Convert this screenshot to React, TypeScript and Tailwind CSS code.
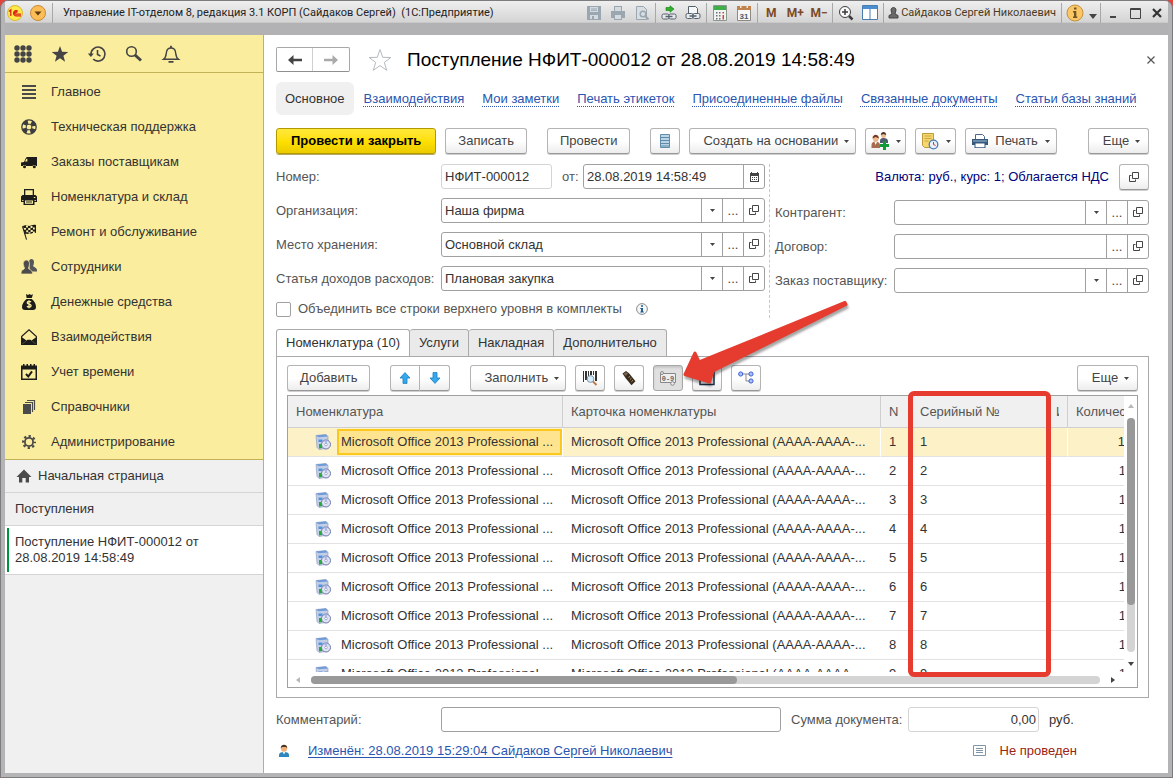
import { useState } from 'react';
import type { ReactNode } from 'react';
import clsx from 'clsx';

const menuItems = [
  { label: 'Главное', icon: <MenuIcon /> },
  { label: 'Техническая поддержка', icon: <RingIcon /> },
  { label: 'Заказы поставщикам', icon: <VanIcon /> },
  { label: 'Номенклатура и склад', icon: <PrinterIcon /> },
  { label: 'Ремонт и обслуживание', icon: <FlagIcon /> },
  { label: 'Сотрудники', icon: <PeopleIcon /> },
  { label: 'Денежные средства', icon: <MoneyIcon /> },
  { label: 'Взаимодействия', icon: <MailIcon /> },
  { label: 'Учет времени', icon: <DateIcon /> },
  { label: 'Справочники', icon: <BooksIcon /> },
  { label: 'Администрирование', icon: <GearIcon /> },
];

const links = [
  'Взаимодействия',
  'Мои заметки',
  'Печать этикеток',
  'Присоединенные файлы',
  'Связанные документы',
  'Статьи базы знаний',
];

const tabs = ['Номенклатура (10)', 'Услуги', 'Накладная', 'Дополнительно'];

const rows = Array.from({ length: 10 }, (_, i) => i + 1);

/* ---------- Sidebar icons ---------- */

function Icon({ children, className }: { children: ReactNode; className?: string }) {
  return (
    <svg viewBox="0 0 16 16" className={clsx('shrink-0', className ?? 'w-4 h-4')} fill="#1c1c1a" aria-hidden="true">
      {children}
    </svg>
  );
}

function MenuIcon() {
  return (
    <Icon>
      <path d="M1 1h14v2H1zM1 5h14v2H1zM1 9h14v2H1zM1 13h14v2H1z" fill="#4a4a4a" />
    </Icon>
  );
}

function RingIcon() {
  return (
    <Icon>
      <circle cx="8" cy="8" r="7.2" fill="#fbed9e" stroke="#3c3c38" strokeWidth="1.3" />
      <circle cx="8" cy="8" r="5" fill="none" stroke="#3c3c40" strokeWidth="4.4" strokeDasharray="4.4 3.45" strokeDashoffset="-1.8" />
      <circle cx="8" cy="8" r="2.900" fill="#fbed9e" stroke="#3c3c38" />
    </Icon>
  );
}

function VanIcon() {
  return (
    <Icon>
      <path d="M6 3h10v9h-1a2 2 0 0 0-3.500 0H5.200a2 2 0 0 0-3.500 0H0V8.500L3 8l2-4.200z" />
      <path d="M4 7.600 5.400 4.800h1V7.600z" fill="#fbed9e" />
      <circle cx="3.500" cy="12.700" r="1.500" />
      <circle cx="13.300" cy="12.700" r="1.500" />
    </Icon>
  );
}

function PrinterIcon() {
  return (
    <Icon>
      <path d="M3 0h10v6h1.500L16 7.500V13h-2.500v3h-11v-3H0V7.500L1.500 6H3z" />
      <path d="M4.300 1.300h7.400V6H4.300zM4 11.500h8v3.200H4z" fill="#fbed9e" />
      <path d="M5 12.400h6v1H5z" />
      <path d="M12.800 8h1.500v1h-1.500zM1.200 11h1.200v1H1.200zM13.600 11h1.200v1h-1.200z" fill="#fbed9e" />
    </Icon>
  );
}

function FlagIcon() {
  return (
    <Icon>
      <path d="M1 2.500 2 2l4 13.500-1 .3z" />
      <path d="M2 2C5 0 7 3 10 1.500c2-.9 3.500-1 5-.5v8c-2-.5-3.500 0-5 .8-2.500 1-4-.8-6.200.4z" />
      <path d="M5 1.500h2v2H5zM9.500 2h2v2h-2zM3 4h2v1.800H3zM7.200 4h2.200v2H7.200zM12 3.500h1.800v2H12zM5.200 6.200h2v2h-2zM9.600 6h2.200v2H9.600zM7.500 8.200h2v1.500h-2zM12 7.500h1.800V9H12z" fill="#fbed9e" />
    </Icon>
  );
}

function PeopleIcon() {
  return (
    <Icon>
      <path d="M8 3c0-4 5-4 5 0 0 2-.8 3-.8 4 0 1 3.800 1.500 3.800 4v1.500H9z" fill="#55555a" />
      <path d="M2.200 4.800c0-5 6.300-5 6.300 0 0 2-1 3.500-1 4.500 0 1.200 4 1.500 4 4.700V15H0v-1c0-3.200 3.500-3.500 3.500-4.700 0-1-1.300-2.500-1.300-4.500z" fill="#4c4c4c" stroke="#fbed9e" strokeWidth=".7" />
    </Icon>
  );
}

function MoneyIcon() {
  return (
    <Icon>
      <path d="M5 0 7 1l1.500-1L10 1l2-.7L10.800 4H5.600zM5.500 5h5.300C13.500 7 15 10 15 13c0 2-1 3-3 3H4c-2 0-3-1-3-3 0-3 2-6 4.500-8z" />
      <path d="M10 8c-.7-.9-3.800-1.100-3.800.7 0 1.900 3.900 1.100 3.900 3 0 1.900-3.200 1.700-4.200.6M8 6.300v8" fill="none" stroke="#fbed9e" strokeWidth="1.300" />
    </Icon>
  );
}

function MailIcon() {
  return (
    <Icon>
      <path d="m.6 7.500 7.400-6.700 7.400 6.700v7.900H.6z" fill="none" stroke="#1c1c1a" strokeWidth="1.100" />
      <path d="M.5 8 5.500 11.500.5 15.500zM15.500 8l-5 3.500 5 4zM1 15.500l5.500-4.800h3L15 15.500z" />
    </Icon>
  );
}

function DateIcon() {
  return (
    <Icon>
      <path d="M0 1.500h2V0h1.500v1.500h2V0H7v1.500h2V0h1.500v1.500h2V0H14v1.500h2V16H0z" />
      <path d="M1.500 5.500h13v9h-13z" fill="#fbed9e" />
      <path d="m5 10 2.300 2.500L11 7.300" fill="none" stroke="#1c1c1a" strokeWidth="2" />
    </Icon>
  );
}

function BooksIcon() {
  return (
    <Icon>
      <path d="M2 5h8v10H2z" fill="#4a4a4a" />
      <path d="M4 3.500h7.500V13M6 1.500h7.500V11" fill="none" stroke="#4a4a4a" strokeWidth="1.200" />
    </Icon>
  );
}

function GearIcon() {
  return (
    <Icon>
      <circle cx="8" cy="8" r="5.900" fill="none" stroke="#4a4a4a" strokeWidth="2.200" strokeDasharray="2.300 2.330" strokeDashoffset="1.150" />
      <circle cx="8" cy="8" r="4.100" fill="none" stroke="#4a4a4a" strokeWidth="1.800" />
    </Icon>
  );
}

/* ---------- Small glyphs used by the form ---------- */

function Caret({ className }: { className?: string }) {
  return (
    <svg viewBox="0 0 5 3" className={clsx('w-[5px] h-[3px] shrink-0', className)} fill="#444" aria-hidden="true">
      <path d="M0 0h5L2.500 3z" />
    </svg>
  );
}

function OpenGlyph() {
  return (
    <svg viewBox="0 0 11 11" className="w-[11px] h-[11px]" fill="none" stroke="#444" aria-hidden="true">
      <path d="M3.500.5h6v6h-6zM2.500 3.500h-2v6h6v-2" />
    </svg>
  );
}

function Btn({ children, label, className }: { children: ReactNode; label?: string; className?: string }) {
  return (
    <button
      type="button"
      aria-label={label}
      className={clsx(
        'flex h-[26px] shrink-0 items-center justify-center whitespace-nowrap rounded-[3px] border border-[#b4b4b4] border-b-[#989898] bg-linear-to-b from-white from-50% to-[#ededed] text-[#444] shadow-[0_1px_0_#cfcfcf]',
        className,
      )}
    >
      {children}
    </button>
  );
}

type FieldProps = {
  id: string;
  label: string;
  value?: string;
  labelClass: string;
  dropdown?: boolean;
};

function Field({ id, label, value = '', labelClass, dropdown = true }: FieldProps) {
  return (
    <div className="flex h-[25px] items-center">
      <label htmlFor={id} className={clsx('shrink-0 whitespace-nowrap', labelClass)}>
        {label}
      </label>
      <div className="flex h-full min-w-0 flex-1 divide-x divide-[#a0a0a0] rounded-[3px] border border-[#a0a0a0] bg-white">
        <input id={id} defaultValue={value} className="min-w-0 flex-1 px-[3px] text-[#333] outline-none" />
        {dropdown && (
          <button type="button" aria-label="Выбрать из списка" className="flex w-[21px] items-center justify-center">
            <Caret />
          </button>
        )}
        <button type="button" aria-label="Выбрать" className="w-[21px] text-[#444]">
          ...
        </button>
        <button type="button" aria-label="Открыть" className="flex w-[20px] items-center justify-center">
          <OpenGlyph />
        </button>
      </div>
    </div>
  );
}

/* ---------- Window title bar ---------- */

function Tool({ label, children }: { label: string; children: ReactNode }) {
  return (
    <button type="button" aria-label={label} className="flex h-6 w-6 items-center justify-center text-xs font-bold text-[#7d4a26]">
      {children}
    </button>
  );
}

function Sep() {
  return <span className="mx-px h-5 w-px bg-[#a8a8a8]" />;
}

function TitleBar() {
  return (
    <header className="flex h-[34px] shrink-0 items-start bg-linear-to-b from-[#efefef] via-[#d4d4d5] via-62% to-[#b2b2b4] to-66% text-[#222]">
      <div className="flex h-6 w-full items-center font-['Roboto',sans-serif] text-[11px]">
        <svg viewBox="0 0 16 16" className="ml-0.5 h-4 w-4 shrink-0" aria-label="1С" role="img">
          <circle cx="8" cy="8" r="7.500" fill="#ffe94a" stroke="#d9b92c" />
          <path d="M2 6.500 3.800 5v6M10.800 6.200A2.600 2.600 0 1 0 8.800 10.800H14M10 7.700a1.100 1.100 0 1 0-.9 1.500H14" fill="none" stroke="#d9201a" strokeWidth="1.300" />
        </svg>
        <button type="button" aria-label="Главное меню" className="ml-[7px]">
          <svg viewBox="0 0 16 16" className="h-4 w-4">
            <circle cx="8" cy="8" r="7.500" fill="#fbbd55" stroke="#c98a35" />
            <path d="M4.500 6.500h7L8 10.500z" fill="#5a3c12" />
          </svg>
        </button>
        <span className="ml-1.5 h-5 w-px bg-[#a8a8a8]" />
        <h1 className="ml-2.5 min-w-0 flex-1 truncate">
          Управление IT-отделом 8, редакция 3.1 КОРП (Сайдаков Сергей)&nbsp; (1С:Предприятие)
        </h1>
        <Tool label="Сохранить">
          <svg viewBox="0 0 14 14" className="h-3.5 w-3.5" fill="#9aa6b0">
            <path d="M0 0h14v14H0z" />
            <path d="M3 1h8v5H3zM3 9h8v4H3z" fill="#d5dade" />
            <path d="M4 2.500h6v1H4zM4 4.200h6v.8H4zM5 10h2v3H5z" />
          </svg>
        </Tool>
        <Tool label="Печать">
          <svg viewBox="0 0 14 14" className="h-3.5 w-3.5" fill="#9aa6b0">
            <path d="M3 0h8v5h3v7h-3v2H3v-2H0V5h3z" />
            <path d="M4 1h6v4H4zM4 9h6v4H4z" fill="#d5dade" />
          </svg>
        </Tool>
        <Tool label="Предварительный просмотр">
          <svg viewBox="0 0 14 14" className="h-3.5 w-3.5" fill="none" stroke="#9aa6b0">
            <path d="M1.500.5h7l3 3v10h-10z" fill="#d9dee2" />
            <circle cx="8" cy="8" r="2.800" strokeWidth="1.500" />
            <path d="m10 10 3.500 3.500" strokeWidth="2" />
          </svg>
        </Tool>
        <Sep />
        <Tool label="Получить ссылку">
          <svg viewBox="0 0 16 16" className="h-4 w-4" fill="none" stroke="#55606a">
            <path d="M5 2.500h4V.8L13 4 9 7.200V5.500H5z" fill="#31b02c" stroke="#1d8a1b" strokeWidth=".7" />
            <rect x="1" y="9" width="7" height="5" rx="1.500" fill="#e8ebee" />
            <rect x="8" y="9" width="7" height="5" rx="1.500" fill="#e8ebee" />
            <path d="M4.500 11.500h7" strokeWidth="1.500" />
          </svg>
        </Tool>
        <Tool label="Перейти по ссылке">
          <svg viewBox="0 0 16 16" className="h-4 w-4" fill="none" stroke="#55606a">
            <path d="M3.500 8V1.500h7l2 2V8" fill="#f4f6f8" />
            <rect x="1" y="8.500" width="7" height="5" rx="1.500" fill="#e8ebee" />
            <rect x="8" y="8.500" width="7" height="5" rx="1.500" fill="#e8ebee" />
            <path d="M4.500 11h7" strokeWidth="1.500" />
          </svg>
        </Tool>
        <Sep />
        <Tool label="Калькулятор">
          <svg viewBox="0 0 14 16" className="h-4 w-3.5">
            <path d="M.5.500h13v15H.5z" fill="#f1f3f1" stroke="#8c988c" />
            <path d="M1 1h12v4H1z" fill="#3fae49" />
            <path d="M3 7h1.500v1.500H3zM6 7h1.500v1.500H6zM3 10h1.500v1.500H3zM6 10h1.500v1.500H6zM3 13h1.500v1.500H3zM6 13h1.500v1.500H6z" fill="#6a7280" />
            <path d="M9.500 7H11v1.500H9.500zM9.500 10H11v4.500H9.500z" fill="#c94a3a" />
          </svg>
        </Tool>
        <Tool label="Календарь">
          <svg viewBox="0 0 14 16" className="h-4 w-3.5">
            <path d="M.5 1.500h13v14H.5z" fill="#f7f7f5" stroke="#8f8a80" />
            <path d="M0 1h14v4H0z" fill="#c0834e" />
            <path d="M3 0h1.500v3H3zM9.500 0H11v3H9.500z" fill="#f3e6d8" />
            <text x="7" y="13.500" fontSize="8" fontWeight="700" textAnchor="middle" fill="#4b5a6b" fontFamily="Liberation Sans">
              31
            </text>
          </svg>
        </Tool>
        <Sep />
        <Tool label="M">M</Tool>
        <Tool label="M+">M+</Tool>
        <Tool label="M-">M−</Tool>
        <Sep />
        <Tool label="Увеличить">
          <svg viewBox="0 0 16 16" className="h-4 w-4" fill="none" stroke="#3c3c3c">
            <circle cx="7" cy="7" r="5.500" fill="#fafafa" />
            <path d="M4 7h6M7 4v6" strokeWidth="1.500" />
            <path d="m11 11 3.500 3.500" strokeWidth="2.500" />
          </svg>
        </Tool>
        <Tool label="Панели">
          <svg viewBox="0 0 16 16" className="h-4 w-4">
            <path d="M.5.500h15v14H.5z" fill="#fff" stroke="#477db0" />
            <path d="M1 1h14v3H1z" fill="#4b8fd0" />
            <path d="M8 4v11" stroke="#477db0" />
          </svg>
        </Tool>
        <Sep />
        <button type="button" className="ml-[3px] mr-1 flex shrink-0 items-center gap-0.5 whitespace-nowrap text-[#4a3a20]">
          <svg viewBox="0 0 11 12" className="h-3 w-[11px]" fill="#6a6a6a" stroke="#444">
            <path d="M3 3c0-3.300 5-3.300 5 0 0 1.800-1 2.500-1 4l3 1.500v2.500H1V8.500L4 7c0-1.500-1-2.200-1-4z" />
          </svg>
          Сайдаков Сергей Николаевич
        </button>
        <Sep />
        <Tool label="О программе">
          <svg viewBox="0 0 18 18" className="h-[18px] w-[18px]">
            <circle cx="9" cy="9" r="8" fill="#fbc766" stroke="#c4913e" />
            <path d="M8 3.500h2.500v2H8zM7 7h3.300v5.500h1V14H7v-1.500h1v-4H7z" fill="#6f5524" />
          </svg>
        </Tool>
        <button type="button" aria-label="Еще команды" className="flex w-3 justify-center pt-1.5">
          <svg viewBox="0 0 8 5" className="h-[5px] w-2" fill="#444">
            <path d="M0 0h8L4 5z" />
          </svg>
        </button>
        <Sep />
        <div className="flex">
          <button type="button" aria-label="Свернуть" className="flex h-6 w-[22px] items-center justify-center">
            <svg viewBox="0 0 10 10" className="h-2.5 w-2.5" fill="#444">
              <path d="M2 8h6v2H2z" />
            </svg>
          </button>
          <button type="button" aria-label="Развернуть" className="flex h-6 w-[22px] items-center justify-center">
            <svg viewBox="0 0 11 11" className="h-[11px] w-[11px]" fill="none" stroke="#444">
              <path d="M.5.500h10v10H.5zM.5 1.500h10" />
            </svg>
          </button>
          <button type="button" aria-label="Закрыть" className="flex h-6 w-[22px] items-center justify-center">
            <svg viewBox="0 0 10 10" className="h-2.5 w-2.5" stroke="#333" strokeWidth="2.200">
              <path d="m1 1 8 8M9 1 1 9" />
            </svg>
          </button>
        </div>
      </div>
    </header>
  );
}

/* ---------- Left side ---------- */

function Sidebar() {
  return (
    <aside className="flex w-[259px] shrink-0 flex-col border-r border-[#c2b25a] bg-[#f0f0f0] text-[#333]">
      <div className="flex h-[38px] shrink-0 items-center gap-[17px] border-b border-[#c2b25a] bg-[#fbed9e] pl-2">
        <button type="button" aria-label="Разделы" className="h-5 w-5">
          <svg viewBox="0 0 20 20" className="h-5 w-5" fill="#444">
            {[4, 10, 16].map(y => [4, 10, 16].map(x => <circle key={`${x}-${y}`} cx={x} cy={y} r="2.700" />))}
          </svg>
        </button>
        <button type="button" aria-label="Избранное" className="h-5 w-5">
          <svg viewBox="0 0 20 20" className="h-5 w-5" fill="#444">
            <path d="m10 2 2.100 5.800 6.200.2-4.900 3.800 1.700 6L10 14.300l-5.100 3.500 1.700-6L1.700 8l6.200-.2z" />
          </svg>
        </button>
        <button type="button" aria-label="История" className="h-5 w-5">
          <svg viewBox="0 0 20 20" className="h-5 w-5" fill="none" stroke="#444" strokeWidth="1.600">
            <path d="M4 10.500a7 7 0 1 1 2.200 4.700" />
            <path d="M10.500 6v4.500l3 1.500" />
            <path d="M.8 9.500h6L3.900 13z" fill="#444" stroke="none" />
          </svg>
        </button>
        <button type="button" aria-label="Поиск" className="h-5 w-5">
          <svg viewBox="0 0 20 20" className="h-5 w-5" fill="none" stroke="#444">
            <circle cx="7.500" cy="7.500" r="4.800" strokeWidth="1.600" />
            <path d="m11 11 6 5.500" strokeWidth="3" />
          </svg>
        </button>
        <button type="button" aria-label="Оповещения" className="h-5 w-5">
          <svg viewBox="0 0 20 20" className="h-5 w-5" fill="none" stroke="#444" strokeWidth="1.400">
            <path d="M2.500 15.300C5 13.500 5 11.500 5.500 8c.4-2.700 2-4 4.500-4s4.100 1.300 4.500 4c.5 3.500.5 5.500 3 7.300z" />
            <path d="M10 4V1.800M7.500 17.800h5" strokeWidth="1.800" />
          </svg>
        </button>
      </div>
      <nav className="shrink-0 border-b border-[#c2b25a] bg-[#fbed9e] pt-px">
        {menuItems.map(item => (
          <button key={item.label} type="button" className="flex h-[35px] w-full items-center gap-3.5 pl-4 text-left">
            {item.icon}
            {item.label}
          </button>
        ))}
      </nav>
      <button type="button" className="flex h-[33px] shrink-0 items-center gap-1.5 border-b border-[#d4d4d4] pl-[11px] text-left">
        <Icon>
          <path d="M8 1.500 15.500 9H13v5.500H9.700V10H6.300v4.500H3V9H.5z" fill="#4a4a4a" />
        </Icon>
        Начальная страница
      </button>
      <button type="button" className="h-[33px] shrink-0 border-b border-[#d4d4d4] pl-2.5 text-left">
        Поступления
      </button>
      <button type="button" className="flex h-[49px] shrink-0 border-b border-[#d4d4d4] bg-white py-0.5 pl-0.5 text-left leading-4">
        <span className="h-full w-0.5 shrink-0 bg-[#00933f]" />
        <span className="w-[200px] py-1.5 pl-1.5">Поступление НФИТ-000012 от 28.08.2019 14:58:49</span>
      </button>
    </aside>
  );
}

/* ---------- Document form ---------- */

function CommandBar() {
  return (
    <div className="mt-[13px] flex gap-[9px]">
      <button
        type="button"
        className="h-[26px] shrink-0 whitespace-nowrap rounded-[3px] border border-[#b09a00] bg-linear-to-b from-[#ffe838] via-[#ffe000] to-[#eccb00] px-3.5 font-bold text-black shadow-[0_1px_0_#b5a860]"
      >
        Провести и закрыть
      </button>
      <Btn className="px-3">Записать</Btn>
      <Btn className="ml-[11px] px-3">Провести</Btn>
      <Btn label="Движения документа" className="ml-[11px] w-[30px]">
        <svg viewBox="0 0 10 14" className="h-3.5 w-2.5">
          <path d="M.5.500h9v13h-9z" fill="#b8d4e6" stroke="#5f8aa8" />
          <path d="M1 3.500h8M1 6.500h8M1 9.500h8M1 12h8" stroke="#5f8aa8" />
        </svg>
      </Btn>
      <Btn className="gap-1.5 pl-[13px] pr-1.5">
        Создать на основании
        <Caret />
      </Btn>
      <Btn label="Участники" className="w-[41px] gap-[7px]">
        <svg viewBox="0 0 18 18" className="h-[18px] w-[18px]">
          <path d="M9 9c0-2 1-3 3.500-3S17 7 17 9v2H9z" fill="#4e5a70" />
          <circle cx="12.500" cy="3.500" r="2.500" fill="#efb98c" />
          <path d="M9.800 3c0-4 5.400-4 5.400 0l-2.700-1z" fill="#4a3020" />
          <path d="M.5 16v-3c0-2 1.500-3.500 4-3.500S9 11 9 13v3z" fill="#a86c50" />
          <circle cx="4.700" cy="6.800" r="2.900" fill="#efb98c" />
          <path d="M1.500 6.500c0-5 6.400-5 6.400 0L4.700 5z" fill="#7a3b1c" />
          <path d="m3.500 10 1.200 3 1.300-3z" fill="#fff" />
          <path d="M12 9h3v3h3v3h-3v3h-3v-3H9v-3h3z" fill="#109a38" />
        </svg>
        <Caret />
      </Btn>
      <Btn label="Напоминание" className="w-[41px] gap-[7px]">
        <svg viewBox="0 0 18 18" className="h-[18px] w-[18px]">
          <path d="M1.500 1.500h11v14h-9l-2-2z" fill="#f7d76c" stroke="#c09a3c" />
          <path d="M3.500 4h7M3.500 6.500h7M3.500 9h4" stroke="#c9a548" />
          <circle cx="12.500" cy="12.500" r="4.300" fill="#e8f1fb" stroke="#4a7ab5" strokeWidth="1.300" />
          <path d="M12.500 10v2.500l2 1" fill="none" stroke="#c8372d" />
        </svg>
        <Caret />
      </Btn>
      <Btn className="gap-[7px] px-1.5">
        <svg viewBox="0 0 16 14" className="h-3.5 w-4">
          <path d="M3.500.5h7l2 2V6h-9z" fill="#fff" stroke="#4c6a87" />
          <path d="M0 5h16v6h-2.500v3h-11v-3H0z" fill="#35597c" />
          <path d="M3.500 9.500h9v3.800h-9z" fill="#fff" />
          <path d="M1 6.500h14v1H1z" fill="#9fbdd6" />
        </svg>
        Печать
        <Caret />
      </Btn>
      <Btn className="ml-auto w-[61px] gap-1.5 pl-1.5">
        Еще
        <Caret />
      </Btn>
    </div>
  );
}

function Requisites() {
  return (
    <div className="mt-2.5 flex gap-1">
      <div className="flex min-w-0 flex-1 flex-col gap-[9px]">
        <div className="flex h-[25px] items-center">
          <label htmlFor="number" className="w-[165px] shrink-0">
            Номер:
          </label>
          <input
            id="number"
            readOnly
            defaultValue="НФИТ-000012"
            className="h-full w-[111px] rounded-[3px] border border-[#d4d4d4] px-[3px] text-[#333] outline-none"
          />
          <label htmlFor="date" className="w-[31px] shrink-0 pl-2.5">
            от:
          </label>
          <div className="flex h-full min-w-0 flex-1 divide-x divide-[#a0a0a0] rounded-[3px] border border-[#a0a0a0]">
            <input id="date" defaultValue="28.08.2019 14:58:49" className="min-w-0 flex-1 px-[3px] text-[#333] outline-none" />
            <button type="button" aria-label="Выбрать дату" className="flex w-[20px] items-center justify-center">
              <svg viewBox="0 0 9 10" className="h-2.5 w-[9px]" fill="#444">
                <path d="M0 1h1V0h1v1h5V0h1v1h1v9H0z" />
                <path d="M1 4h7v5H1z" fill="#fff" />
                <path d="M2 5h1v1H2zM4 5h1v1H4zM6 5h1v1H6zM2 7h1v1H2zM4 7h1v1H4zM6 7h1v1H6z" />
              </svg>
            </button>
          </div>
        </div>
        <Field id="org" label="Организация:" value="Наша фирма" labelClass="w-[165px]" />
        <Field id="place" label="Место хранения:" value="Основной склад" labelClass="w-[165px]" />
        <Field id="article" label="Статья доходов расходов:" value="Плановая закупка" labelClass="w-[165px]" />
        <div className="flex h-[18px] items-center">
          <input
            id="merge"
            type="checkbox"
            className="h-[15px] w-[15px] shrink-0 appearance-none rounded-[2px] border border-[#a0a0a0] bg-white checked:bg-[#ffe000]"
          />
          <label htmlFor="merge" className="ml-[7px] whitespace-nowrap">
            Объединить все строки верхнего уровня в комплекты
          </label>
          <svg viewBox="0 0 12 12" className="ml-3.5 h-3 w-3 shrink-0" role="img" aria-label="Подсказка">
            <circle cx="6" cy="6" r="5.400" fill="#f4f6f8" stroke="#8b8b8b" />
            <path d="M5 2.200h2v1.600H5zM4.300 5H7v3.500h.8v1H4.300v-1H5V6h-.7z" fill="#1f5f95" />
          </svg>
        </div>
      </div>
      <div className="flex w-[380px] shrink-0 flex-col gap-[9px] border-l border-dashed border-[#c8c8c8] pl-[5px]">
        <div className="mb-px flex items-center justify-end gap-2.5">
          <a href="#currency" className="text-[#00007c]">
            Валюта: руб., курс: 1; Облагается НДС
          </a>
          <Btn label="Открыть валюту" className="w-[30px]">
            <OpenGlyph />
          </Btn>
        </div>
        <Field id="partner" label="Контрагент:" labelClass="w-[119px]" />
        <Field id="contract" label="Договор:" labelClass="w-[119px]" dropdown={false} />
        <Field id="order" label="Заказ поставщику:" labelClass="w-[119px]" />
      </div>
    </div>
  );
}

function TableToolbar() {
  return (
    <div className="flex shrink-0 gap-[9px]">
      <Btn className="px-3">Добавить</Btn>
      <div className="mx-[11px] flex">
        <Btn label="Переместить вверх" className="w-[30px] rounded-r-none">
          <svg viewBox="0 0 12 12" className="h-3 w-3">
            <path d="m6 .6 5 5.400H8v5.400H4V6H1z" fill="#35a9ee" stroke="#1b7cc0" strokeWidth=".8" />
          </svg>
        </Btn>
        <Btn label="Переместить вниз" className="w-[30px] rounded-l-none border-l-0">
          <svg viewBox="0 0 12 12" className="h-3 w-3">
            <path d="m6 11.400 5-5.400H8V.6H4V6H1z" fill="#35a9ee" stroke="#1b7cc0" strokeWidth=".8" />
          </svg>
        </Btn>
      </div>
      <Btn className="gap-1.5 pl-[13px] pr-1.5">
        Заполнить
        <Caret />
      </Btn>
      <Btn label="Поиск по штрихкоду" className="w-[30px]">
        <svg viewBox="0 0 16 16" className="h-4 w-4">
          <path d="M1 1h1v11H1zM3 1h2v9H3zM6 1h1v8H6zM8 1h2v4H8zM11 1h1v4h-1zM13 1h2v10h-2z" fill="#333" />
          <circle cx="8.500" cy="9" r="3.400" fill="#d7ebf8" stroke="#7b98b0" />
          <path d="m11 11.500 3.500 3.500" stroke="#c07a4a" strokeWidth="2" />
        </svg>
      </Btn>
      <Btn label="Терминал сбора данных" className="w-[30px]">
        <svg viewBox="0 0 16 16" className="h-4 w-4">
          <path d="M1.500 3.500 5 1l3 2.200 6.500 8-4 4L4.500 8z" fill="#3a2c20" />
          <path d="m2.500 3.700 2.500-1.800 2 1.500L4.800 6z" fill="#77624c" />
          <path d="m7.500 7.500 1.500-1.300M9 9.500l1.500-1.300M10.500 11.500l1.500-1.300" stroke="#b79c62" />
        </svg>
      </Btn>
      <div className="relative">
        <button
          type="button"
          aria-label="Серийные номера"
          aria-pressed="true"
          className="flex h-[26px] w-[30px] items-center justify-center rounded-[3px] border border-[#a6a6a6] bg-[#e0e0e0] shadow-[inset_0_2px_2px_#c8c8c8]"
        >
          <svg viewBox="0 0 18 18" className="h-[18px] w-[18px]" fill="none" stroke="#888">
            <path d="M1.500 4.500h15v9h-15z" fill="#eee" />
            <circle cx="3" cy="4" r="1.500" fill="#eee" />
            <circle cx="13.500" cy="14.500" r="1.800" fill="#eee" />
            <text x="9" y="11.500" fontSize="7" fontWeight="700" textAnchor="middle" fill="#666" stroke="none" fontFamily="Liberation Mono">
              0-9
            </text>
          </svg>
        </button>
        {/* Red pointer */}
        <svg
          viewBox="0 0 168 90"
          className="pointer-events-none absolute bottom-0 left-full z-10 h-[90px] w-[168px] drop-shadow-[1px_3px_1px_rgba(0,0,0,0.35)]"
          fill="#e63c2f"
          stroke="#e63c2f"
          strokeWidth="3"
          strokeLinejoin="round"
          aria-hidden="true"
        >
          <path d="M2 73.500 12 52l4 9L162 1.500l1 2L30 70l-3.500 11z" />
        </svg>
      </div>
      <Btn label="Выгрузить" className="w-[30px]">
        <svg viewBox="0 0 16 16" className="h-4 w-4" fill="none" stroke="#1d3247">
          <path d="M1 1h14v13.500H1z" strokeWidth="1.500" />
          <path d="M8 12V4M5.500 6.500 8 4l2.500 2.500" strokeWidth="1.500" />
        </svg>
      </Btn>
      <Btn label="Структура" className="w-[30px]">
        <svg viewBox="0 0 16 16" className="h-4 w-4" fill="none" stroke="#8b8b8b">
          <path d="M5 4h6M8 4v7h3" />
          <circle cx="2.700" cy="4" r="2.100" fill="#a9c2fa" stroke="#3f5fd0" />
          <circle cx="13" cy="4" r="2.100" fill="#a9c2fa" stroke="#3f5fd0" />
          <circle cx="13" cy="11" r="2.100" fill="#a9c2fa" stroke="#3f5fd0" />
        </svg>
      </Btn>
      <Btn className="ml-auto w-[61px] gap-1.5 pl-1.5">
        Еще
        <Caret />
      </Btn>
    </div>
  );
}

function SoftwareIcon() {
  return (
    <svg viewBox="0 0 16 16" className="h-4 w-4 shrink-0" aria-hidden="true">
      <path d="M1 1.500 11 .5l2 2V14l-9 1.500-2-2z" fill="#c3cfe6" stroke="#8492b5" strokeWidth=".6" />
      <path d="m1 1.500 2.500 1.700L13 2.500 11 .5z" fill="#6f9bd8" />
      <path d="M3.500 5.500h4V8h-4z" fill="#4f93e0" />
      <path d="M4 10h3v4l-3 .5z" fill="#27a83a" />
      <circle cx="11" cy="10.500" r="4.500" fill="#dfe4f4" stroke="#6d78a8" />
      <path d="M11 10.500 9 6.700a4.300 4.300 0 0 1 3.500 0z" fill="#aab8e6" />
      <circle cx="11" cy="10.500" r="1.300" fill="#fff" stroke="#8b94bd" strokeWidth=".7" />
    </svg>
  );
}

function GoodsTable() {
  const [current, setCurrent] = useState(1);
  const th = 'h-8 border-b border-r border-b-[#cfcfcf] border-r-[#cfcfcf] bg-[#f0f0f0] px-2 text-left font-normal text-[#555]';

  return (
    <div className="relative mt-1 flex min-h-0 flex-1 flex-col border border-[#a0a0a0]">
      <div className="flex min-h-0 flex-1">
        <div className="min-w-0 flex-1 overflow-hidden">
          <table className="w-[846px] table-fixed border-separate border-spacing-0 text-[#333]">
            <colgroup>
              <col className="w-[275px]" />
              <col className="w-[318px]" />
              <col className="w-[31px]" />
              <col className="w-[136px]" />
              <col className="w-[20px]" />
              <col className="w-[66px]" />
            </colgroup>
            <thead>
              <tr>
                <th className={th}>Номенклатура</th>
                <th className={th}>Карточка номенклатуры</th>
                <th className={th}>N</th>
                <th className={th}>Серийный №</th>
                <th className={th}>
                  <div className="overflow-hidden">И</div>
                </th>
                <th className={th}>Количество</th>
              </tr>
            </thead>
            <tbody>
              {rows.map(n => {
                const active = n === current;
                const td = clsx(
                  'h-[29px] whitespace-nowrap border-b border-b-[#e2e2e2] px-2 py-0',
                  active && 'border-r border-r-white bg-[#fdf1c8]',
                );
                return (
                  <tr key={n} onClick={() => setCurrent(n)}>
                    <td className={clsx(td, 'pr-0!')}>
                      <div className="flex items-center gap-1.5 pl-[19px]">
                        <SoftwareIcon />
                        <span
                          className={clsx(
                            'flex h-[26px] flex-1 items-center border-2 pl-0.5',
                            active ? 'border-[#fac81e] bg-[#ffe48f]' : 'border-transparent',
                          )}
                        >
                          Microsoft Office 2013 Professional ...
                        </span>
                      </div>
                    </td>
                    <td className={td}>Microsoft Office 2013 Professional (AAAA-AAAA-...</td>
                    <td className={td}>{n}</td>
                    <td className={td}>{n}</td>
                    <td className={td} />
                    <td className={clsx(td, 'text-right')}>1</td>
                  </tr>
                );
              })}
            </tbody>
          </table>
        </div>
        <div className="flex w-[13px] shrink-0 flex-col items-center pb-1.5 pt-2">
          <svg viewBox="0 0 6 4" className="h-1 w-1.5" fill="#b8b8b8">
            <path d="M0 4h6L3 0z" />
          </svg>
          <div className="my-2.5 w-2 flex-1 rounded-full bg-[#d4d4d4]">
            <div className="h-4/5 rounded-full bg-[#999]" />
          </div>
          <svg viewBox="0 0 6 4" className="h-1 w-1.5" fill="#444">
            <path d="M0 0h6L3 4z" />
          </svg>
        </div>
      </div>
      <div className="flex h-[15px] shrink-0 items-center pl-2 pr-[22px]">
        <svg viewBox="0 0 4 6" className="h-1.5 w-1" fill="#b8b8b8">
          <path d="M4 0v6L0 3z" />
        </svg>
        <div className="mx-[11px] h-2 flex-1 rounded-full bg-[#d4d4d4]">
          <div className="h-2 w-[54%] rounded-full bg-[#999]" />
        </div>
        <svg viewBox="0 0 4 6" className="h-1.5 w-1" fill="#444">
          <path d="M0 0v6l4-3z" />
        </svg>
      </div>
      {/* Highlight around the serial number column */}
      <div className="pointer-events-none absolute bottom-2.5 left-[620px] top-[-5px] w-[143px] rounded-md border-[5px] border-[#e63c2f]" />
    </div>
  );
}

function DocumentForm() {
  const [tab, setTab] = useState(tabs[0]);

  return (
    <main className="flex min-w-0 flex-1 flex-col bg-white pb-2.5 pl-3 pr-[19px] pt-3 text-[#555]">
      <div className="flex h-[25px] shrink-0 items-center">
        <div className="flex h-full divide-x divide-[#d0d0d0] rounded-[2px] border border-[#a8a8a8] border-b-[#909090]">
          <button type="button" aria-label="Назад" className="flex w-9 items-center justify-center">
            <svg viewBox="0 0 14 10" className="h-2.5 w-3.5" fill="#444">
              <path d="M0 5 5.500 0v3.700H14v2.600H5.500V10z" />
            </svg>
          </button>
          <button type="button" aria-label="Вперед" className="flex w-9 items-center justify-center">
            <svg viewBox="0 0 14 10" className="h-2.5 w-3.5" fill="#aaa">
              <path d="M14 5 8.500 0v3.700H0v2.600h8.500V10z" />
            </svg>
          </button>
        </div>
        <button type="button" aria-label="В избранное" className="ml-[18px]">
          <svg viewBox="0 0 24 24" className="h-6 w-6" fill="none" stroke="#b4bac0">
            <path d="m12 1.500 2.700 7.800 8.100.2-6.500 4.900 2.400 7.900-6.700-4.700-6.700 4.700 2.400-7.900L1.200 9.500l8.100-.2z" />
          </svg>
        </button>
        <h2 className="ml-[15px] flex-1 truncate text-[19px] leading-6 text-black">Поступление НФИТ-000012 от 28.08.2019 14:58:49</h2>
        <button type="button" aria-label="Закрыть документ" className="-mr-2.5 flex h-4 w-4 items-center justify-center">
          <svg viewBox="0 0 8 8" className="h-2 w-2" stroke="#555" strokeWidth="1.200">
            <path d="m.5.500 7 7M7.500.500l-7 7" />
          </svg>
        </button>
      </div>

      <nav className="mt-2.5 flex shrink-0 items-center gap-[18px]">
        <button type="button" className="-mr-2 h-[33px] rounded-md bg-[#f0f0f0] px-[9px] text-[#333]">
          Основное
        </button>
        {links.map(link => (
          <a
            key={link}
            href="#link"
            className="whitespace-nowrap text-[#2a55b0] underline decoration-dotted decoration-1 underline-offset-[3px]"
          >
            {link}
          </a>
        ))}
      </nav>

      <CommandBar />
      <Requisites />

      <div role="tablist" className="mt-[11px] flex shrink-0">
        {tabs.map(name => (
          <button
            key={name}
            type="button"
            role="tab"
            aria-selected={name === tab}
            onClick={() => setTab(name)}
            className={clsx(
              '-mb-px h-7 whitespace-nowrap rounded-t-[3px] border border-[#aaa] px-[9px] text-[#333] not-first:border-l-0',
              name === tab ? 'border-b-white bg-white' : 'bg-[#eaeaea]',
            )}
          >
            {name}
          </button>
        ))}
      </div>
      <section className="flex min-h-0 flex-1 flex-col border border-[#aaa] px-2.5 pb-[9px] pt-2">
        <TableToolbar />
        <GoodsTable />
      </section>

      <div className="mt-[9px] flex h-[25px] shrink-0 items-center">
        <label htmlFor="comment" className="w-[165px] shrink-0">
          Комментарий:
        </label>
        <input id="comment" className="h-full w-[340px] rounded-[3px] border border-[#a0a0a0] px-[3px] outline-none" />
        <label htmlFor="total" className="w-[127px] shrink-0 pl-2.5">
          Сумма документа:
        </label>
        <input
          id="total"
          readOnly
          defaultValue="0,00"
          className="h-full w-[131px] rounded-[3px] border border-[#d4d4d4] px-0.5 text-right text-[#333] outline-none"
        />
        <span className="ml-2.5 text-[#333]">руб.</span>
      </div>

      <footer className="mt-1.5 flex h-[25px] shrink-0 items-center">
        <svg viewBox="0 0 12 14" className="ml-0.5 h-3.5 w-3" aria-hidden="true">
          <path d="M1 13V11c0-2 1.500-3 5-3s5 1 5 3v2z" fill="#2f86bd" />
          <circle cx="6" cy="4.700" r="3" fill="#f0b078" />
          <path d="M2.800 4.500c-.6-5 7-5 6.400 0L8 3H4z" fill="#4a3422" />
          <path d="m4.800 8 1.200 2.500L7.200 8z" fill="#fff" />
        </svg>
        <a href="#history" className="ml-[18px] text-[#2a55b0] underline underline-offset-2">
          Изменён: 28.08.2019 15:29:04 Сайдаков Сергей Николаевич
        </a>
        <div className="ml-auto mr-[72px] flex items-center gap-3.5 text-[#9a2412]">
          <svg viewBox="0 0 13 11" className="h-[11px] w-[13px]" fill="none" stroke="#8095a8" aria-hidden="true">
            <path d="M.5.500h12v10H.5zM3 3.500h7M3 5.500h7M3 7.500h7" />
          </svg>
          Не проведен
        </div>
      </footer>
    </main>
  );
}

export default function App() {
  return (
    <div className="bg-[#e0443c] font-['Liberation_Sans',Arial,sans-serif] text-[13px] leading-5">
      <div className="flex h-screen min-h-[700px] flex-col overflow-hidden rounded-t-lg border border-[#7c7c7e] bg-[#b4b4b6] px-1 pb-1">
        <TitleBar />
        <div className="flex min-h-0 flex-1">
          <Sidebar />
          <DocumentForm />
        </div>
      </div>
    </div>
  );
}
